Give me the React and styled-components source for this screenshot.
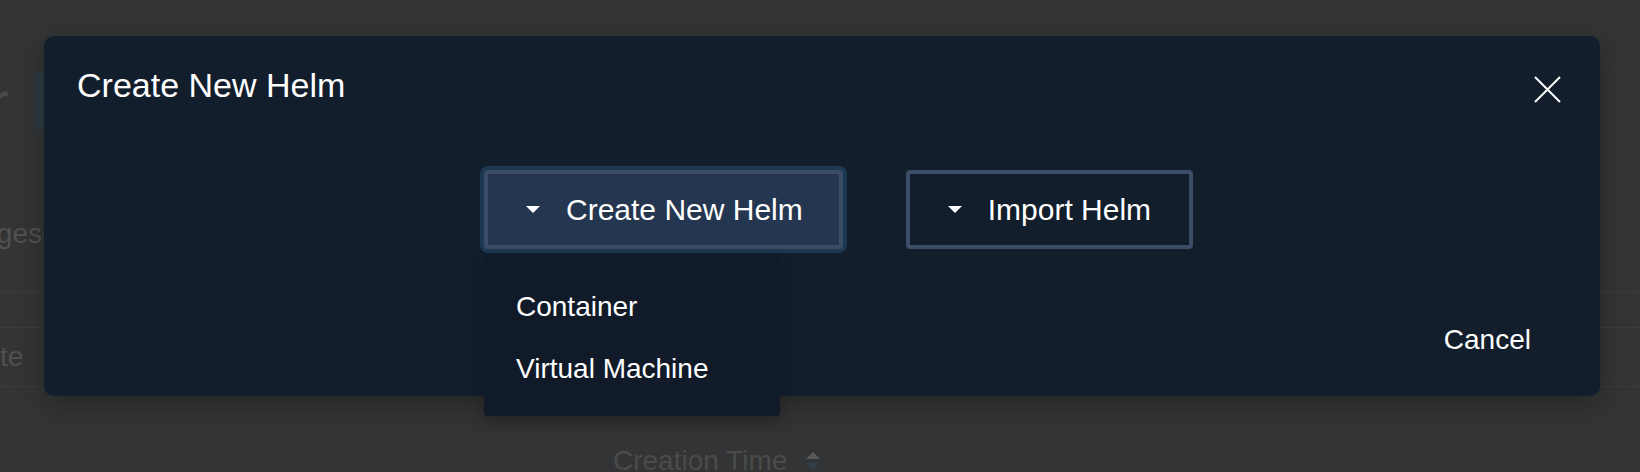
import React from "react";
import styled, { createGlobalStyle } from "styled-components";

const GlobalStyle = createGlobalStyle`
  * {
    box-sizing: border-box;
  }
  body {
    margin: 0;
    background: #333435;
    font-family: "Liberation Sans", Arial, sans-serif;
  }
`;

const Page = styled.div`
  position: relative;
  width: 1640px;
  height: 472px;
  overflow: hidden;
  background: #333435;
`;

/* faded page behind the dialog */
const Backdrop = styled.div`
  display: flex;
  flex-direction: column;
`;

const TopBar = styled.div`
  display: flex;
  align-items: center;
  gap: 25px;
  margin-top: 72px;
  height: 59px;
`;

const PageTitle = styled.span`
  margin-left: -10px;
  font-size: 56px;
  line-height: 59px;
  color: #48494a;
`;

const Pill = styled.div`
  width: 140px;
  height: 59px;
  border-radius: 6px;
  background: #2d3a41;
`;

const TabLabel = styled.div`
  margin-top: 87px;
  margin-left: -81px;
  font-size: 28px;
  line-height: 32px;
  color: #505152;
`;

const Divider = styled.div`
  margin-top: 42px;
  height: 1px;
  background: #3c3c3d;
`;

const FilterBox = styled.div`
  display: flex;
  align-items: center;
  margin-top: 34px;
  height: 60px;
  border-top: 1px solid #3c3c3d;
  border-bottom: 1px solid #3c3c3d;
  font-size: 28px;
  color: #4e4f50;
`;

const FilterText = styled.span`
  margin-left: -67px;
`;

const ColumnHead = styled.div`
  display: flex;
  align-items: center;
  gap: 18px;
  margin-top: 58px;
  margin-left: 613px;
  font-size: 28px;
  line-height: 32px;
  color: #4a4b4c;
`;

/* dialog */
const Modal = styled.div`
  position: absolute;
  left: 44px;
  top: 36px;
  width: 1556px;
  height: 360px;
  display: flex;
  flex-direction: column;
  background: #131e2d;
  border-radius: 10px;
  box-shadow: 0 8px 28px rgba(0, 0, 0, 0.28);
  color: #ffffff;
`;

const Header = styled.div`
  display: flex;
  justify-content: space-between;
  align-items: flex-start;
  padding: 29px 39px 0 33px;
`;

const Title = styled.h2`
  margin: 0;
  font-size: 34px;
  line-height: 40px;
  font-weight: 400;
`;

const CloseButton = styled.button`
  display: flex;
  margin-top: 11px;
  padding: 0;
  border: none;
  background: none;
  color: #ffffff;
  cursor: pointer;
`;

const ButtonRow = styled.div`
  display: flex;
  gap: 63px;
  margin-top: 65px;
  padding-left: 440px;
`;

const MenuWrap = styled.div`
  position: relative;
`;

const HelmButton = styled.button`
  display: flex;
  align-items: center;
  gap: 26px;
  height: 79px;
  padding: 0 ${(p) => (p.$open ? "36px" : "38px")} 0 38px;
  border: 4px solid ${(p) => (p.$open ? "#3a4c66" : "#3c4d67")};
  border-radius: 4px;
  background: ${(p) => (p.$open ? "#253750" : "transparent")};
  box-shadow: ${(p) => (p.$open ? "0 0 0 4px #1d3853" : "none")};
  color: #ffffff;
  font-family: inherit;
  font-size: 30px;
  white-space: nowrap;
  cursor: pointer;
`;

const Caret = styled.span`
  width: 0;
  height: 0;
  border-left: 7px solid transparent;
  border-right: 7px solid transparent;
  border-top: 7px solid #ffffff;
`;

const Menu = styled.ul`
  position: absolute;
  top: calc(100% + 5px);
  left: 0;
  z-index: 2;
  width: 296px;
  margin: 0;
  padding: 22px 0 16px;
  list-style: none;
  background: #111a28;
  border-radius: 0 0 4px 4px;
  box-shadow: 0 6px 16px rgba(0, 0, 0, 0.25);
`;

const MenuItem = styled.li`
  display: flex;
  align-items: center;
  height: 62px;
  padding-left: 32px;
  font-size: 28px;
  color: #ffffff;
`;

const Footer = styled.div`
  display: flex;
  justify-content: flex-end;
  margin-top: auto;
  padding: 0 45px 32px 0;
`;

const TextButton = styled.button`
  height: 48px;
  padding: 0 24px;
  border: none;
  background: none;
  color: #ffffff;
  font-family: inherit;
  font-size: 28px;
  cursor: pointer;
`;

const CloseIcon = () => (
  <svg width="27" height="27" viewBox="0 0 27 27">
    <path d="M1 1L26 26M26 1L1 26" stroke="currentColor" strokeWidth="2" />
  </svg>
);

const SortIcon = () => (
  <svg width="16" height="20" viewBox="0 0 16 20">
    <path d="M8 1L15 8H1Z" fill="#58595a" />
    <path d="M1 12H15L8 19Z" fill="#2f3e4c" />
  </svg>
);

export default function App() {
  return (
    <Page>
      <GlobalStyle />
      <Backdrop>
        <TopBar>
          <PageTitle>r</PageTitle>
          <Pill />
        </TopBar>
        <TabLabel>Packages</TabLabel>
        <Divider />
        <FilterBox>
          <FilterText>Update</FilterText>
        </FilterBox>
        <ColumnHead>
          Creation Time
          <SortIcon />
        </ColumnHead>
      </Backdrop>

      <Modal>
        <Header>
          <Title>Create New Helm</Title>
          <CloseButton aria-label="Close">
            <CloseIcon />
          </CloseButton>
        </Header>
        <ButtonRow>
          <MenuWrap>
            <HelmButton $open>
              <Caret />
              Create New Helm
            </HelmButton>
            <Menu>
              <MenuItem>Container</MenuItem>
              <MenuItem>Virtual Machine</MenuItem>
            </Menu>
          </MenuWrap>
          <HelmButton>
            <Caret />
            Import Helm
          </HelmButton>
        </ButtonRow>
        <Footer>
          <TextButton>Cancel</TextButton>
        </Footer>
      </Modal>
    </Page>
  );
}
